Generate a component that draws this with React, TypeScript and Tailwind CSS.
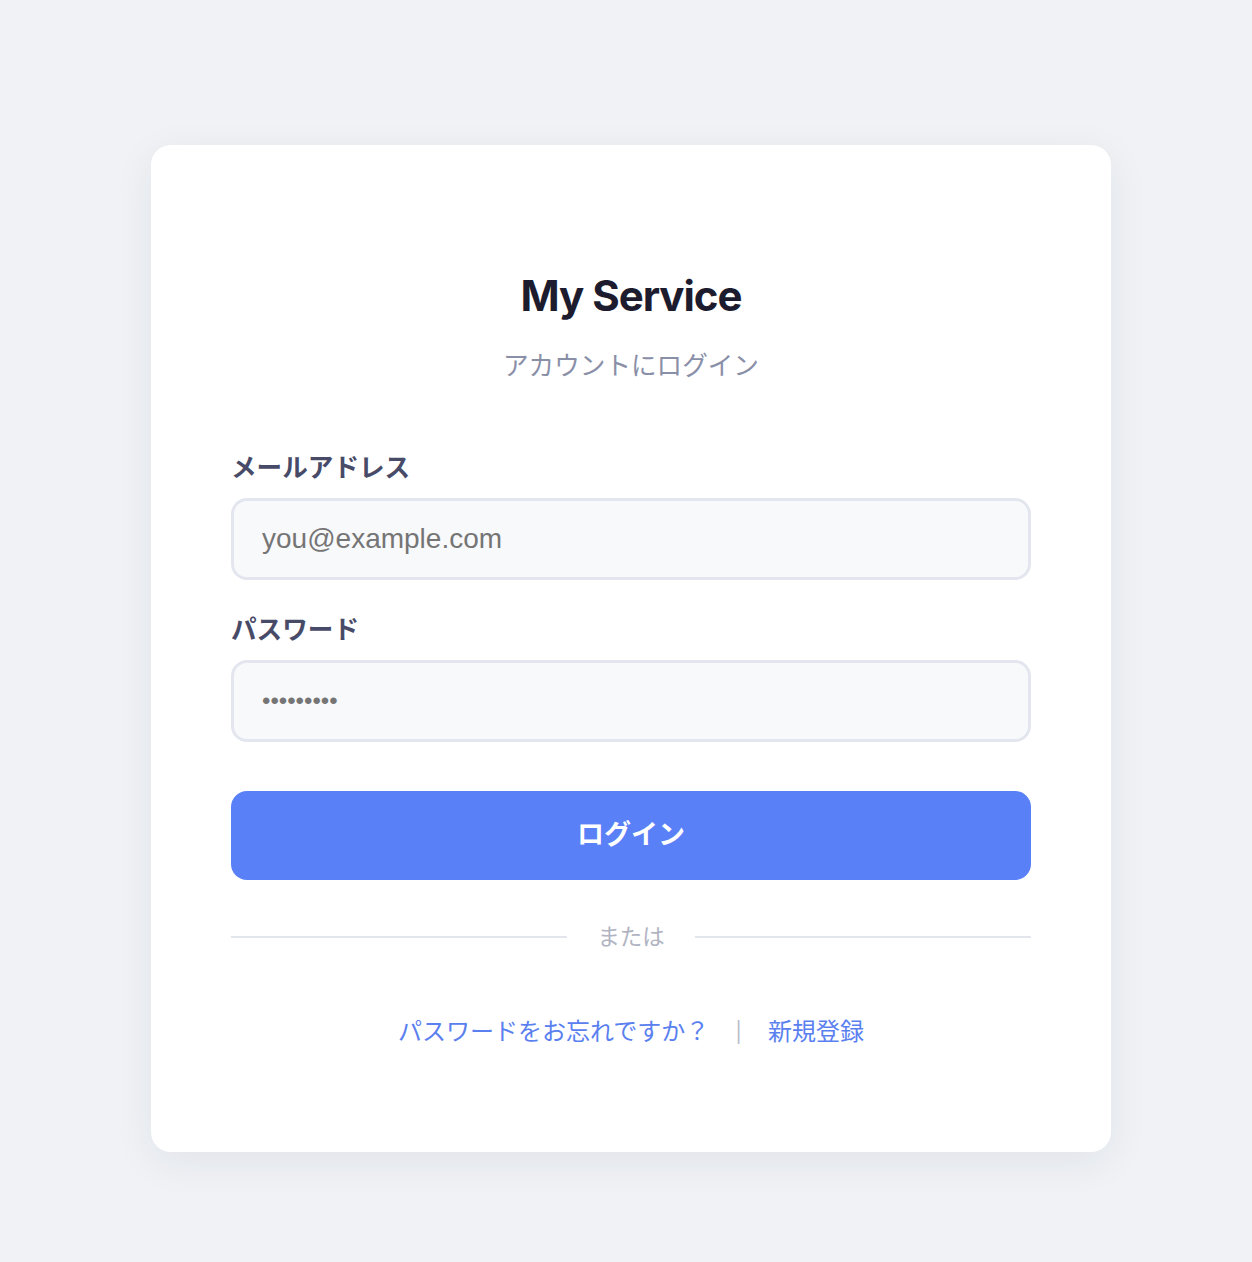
const jp = "font-['Inter','Noto_Sans_CJK_JP',sans-serif]";

function Field({ label, type, placeholder, gap, size }: { label: string; type: string; placeholder: string; gap: string; size: string }) {
  return (
    <div className={gap}>
      <label className="block text-[25.6px] leading-[36px] font-bold text-[#474b68] mb-[12px]">{label}</label>
      <input
        type={type}
        placeholder={placeholder}
        className={`block w-full h-[82px] rounded-[16px] border-[3px] border-[#e3e6ee] bg-[#f8f9fb] px-[28px] ${size} font-['Liberation_Sans',Arial,sans-serif] text-[#333] placeholder:text-[#757575] outline-none`}
      />
    </div>
  );
}

export default function App() {
  return (
    <div className={`min-h-screen bg-[#f0f2f5] pl-[10px] pt-[145px] pb-[110px] ${jp}`}>
      <div className="mx-auto w-[960px] rounded-[20px] bg-white px-[80px] pt-[124px] pb-[102px] shadow-[0_10px_40px_rgba(30,40,80,0.07)]">
        <h1 className="text-center text-[42px] leading-[53px] font-bold tracking-[-0.025em] text-[#1c1c2e]">My Service</h1>
        <p className="mt-[26px] text-center text-[25.6px] leading-[36px] text-[#8a8fa8]">アカウントにログイン</p>

        <form className="mt-[66px]" onSubmit={(e) => e.preventDefault()}>
          <Field label="メールアドレス" type="email" placeholder="you@example.com" gap="" size="text-[28px]" />
          <Field label="パスワード" type="password" placeholder="•••••••••" gap="mt-[32px]" size="text-[24px]" />

          <button
            type="submit"
            className="mt-[49px] block w-full h-[89px] rounded-[16px] bg-[#5a80f8] text-white text-[27px] font-bold"
          >
            ログイン
          </button>
        </form>

        {/* divider */}
        <div className="mt-[39px] flex items-center">
          <div className="h-[2px] flex-1 bg-[#e4e6ee]"></div>
          <span className="px-[30px] text-[22.4px] leading-[36px] text-[#b0b4c2]">または</span>
          <div className="h-[2px] flex-1 bg-[#e4e6ee]"></div>
        </div>

        <div className="mt-[59px] flex items-center justify-center text-[24px] leading-[36px]">
          <a href="#" className="text-[#5a80f0]">パスワードをお忘れですか？</a>
          <span className="mx-[26px] text-[20px] text-[#b8bccb]">|</span>
          <a href="#" className="text-[#5a80f0]">新規登録</a>
        </div>
      </div>
    </div>
  );
}
